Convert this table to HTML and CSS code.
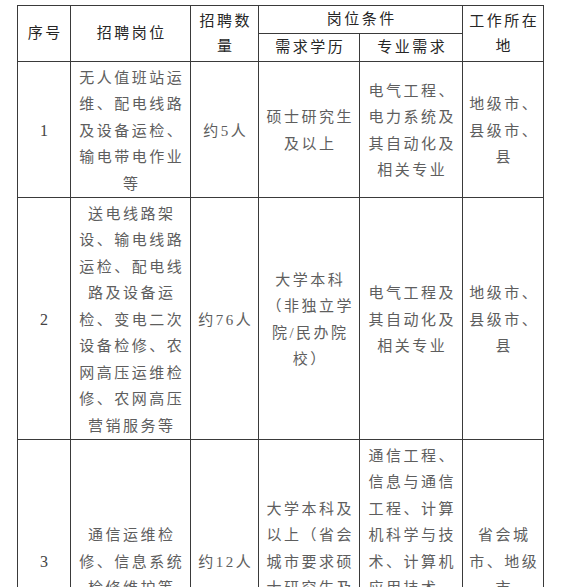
FILE: index.html
```html
<!DOCTYPE html>
<html lang="zh-CN">
<head>
<meta charset="utf-8">
<title>招聘岗位</title>
<link rel="stylesheet" href="styles.css">
</head>
<body>
<div class="page">
<table class="jobs">
  <colgroup>
    <col class="c-no">
    <col class="c-pos">
    <col class="c-num">
    <col class="c-edu">
    <col class="c-major">
    <col class="c-loc">
  </colgroup>
  <thead>
    <tr>
      <th rowspan="2">序号</th>
      <th rowspan="2">招聘岗位</th>
      <th rowspan="2">招聘数量</th>
      <th colspan="2" class="group">岗位条件</th>
      <th rowspan="2">工作所在地</th>
    </tr>
    <tr>
      <th class="narrow">需求学历</th>
      <th class="narrow">专业需求</th>
    </tr>
  </thead>
  <tbody>
    <tr>
      <td class="num">1</td>
      <td>无人值班站运维、配电线路及设备运检、输电带电作业等</td>
      <td>约5人</td>
      <td class="narrow">硕士研究生及以上</td>
      <td class="narrow">电气工程、电力系统及其自动化及相关专业</td>
      <td>地级市、县级市、县</td>
    </tr>
    <tr>
      <td class="num">2</td>
      <td>送电线路架设、输电线路运检、配电线路及设备运检、变电二次设备检修、农网高压运维检修、农网高压营销服务等</td>
      <td>约76人</td>
      <td class="narrow">大学本科（非独立学院/民办院校）</td>
      <td class="narrow">电气工程及其自动化及相关专业</td>
      <td>地级市、县级市、县</td>
    </tr>
    <tr>
      <td class="num">3</td>
      <td>通信运维检修、信息系统检修维护等</td>
      <td>约12人</td>
      <td class="narrow">大学本科及以上（省会城市要求硕士研究生及以上）</td>
      <td class="narrow">通信工程、信息与通信工程、计算机科学与技术、计算机应用技术、软件工程、网络工程等相关专业</td>
      <td>省会城市、地级市</td>
    </tr>
  </tbody>
</table>
</div>
</body>
</html>
```
FILE: styles.css
```css
html, body {
  margin: 0;
  background: #ffffff;
}

body {
  font-family: "Liberation Serif", "Noto Sans CJK SC", serif;
}

.page {
  padding: 5px 0 0 17px;
}

.jobs {
  border-collapse: collapse;
  table-layout: fixed;
  width: 527px;
}

.c-no { width: 53px; }
.c-pos { width: 120px; }
.c-num { width: 68px; }
.c-edu { width: 101px; }
.c-major { width: 103px; }
.c-loc { width: 81px; }

.jobs th,
.jobs td {
  border: 1px solid #3a3a3a;
  padding: 1px 2px 1px 4.5px;
  text-align: center;
  vertical-align: middle;
  font-size: 15px;
  line-height: 26.5px;
  letter-spacing: 2.5px;
  font-weight: normal;
}

.jobs th {
  color: #262626;
  line-height: 25px;
}

.jobs td {
  color: #5e5e5e;
  padding-top: 2.5px;
  padding-bottom: 0;
}

.jobs .narrow {
  padding-left: 6.5px;
  padding-right: 4px;
}

.jobs td.num {
  font-size: 16px;
  color: #444444;
}
```
